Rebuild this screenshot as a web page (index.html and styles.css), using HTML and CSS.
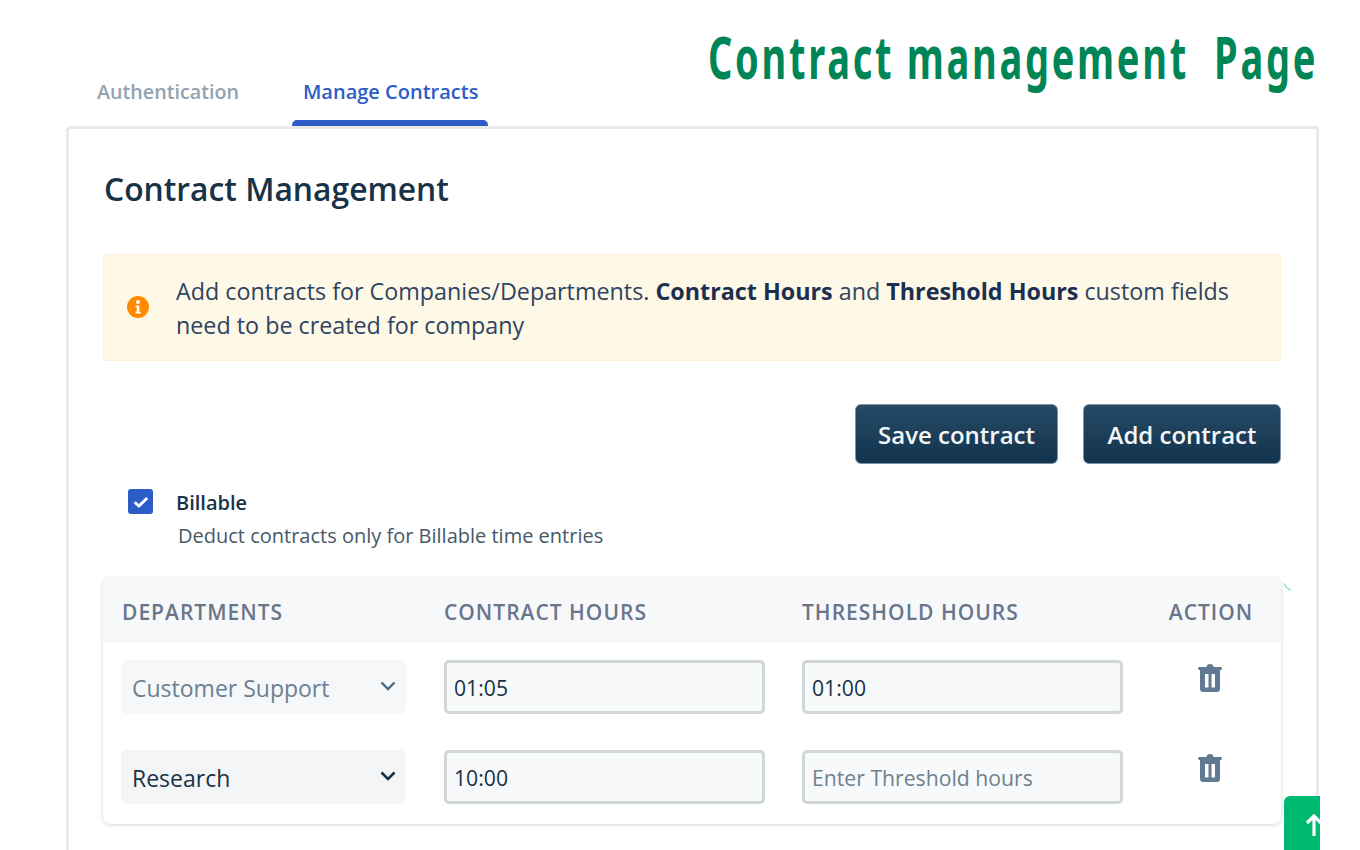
FILE: index.html
```html
<!DOCTYPE html>
<html>
<head>
    <meta charset="UTF-8">
    <meta name="viewport" content="width=device-width, initial-scale=1.0">
    <title>Contract management Page</title>
    <link rel="stylesheet" href="styles.css">
</head>
<body>
    <div class="page">
        <div class="banner">Contract management  Page</div>

        <div class="tabs">
            <div class="tab">Authentication</div>
            <div class="tab tab-active">Manage Contracts</div>
        </div>

        <div class="card">
            <h2 class="card-title">Contract Management</h2>

            <div class="notice">
                <svg class="notice-icon" viewBox="0 0 22 22">
                    <circle cx="11" cy="11" r="11" fill="#ff8a00"/>
                    <circle cx="11" cy="6" r="2" fill="#fff"/>
                    <path d="M8.500 9.500h3.800v6.200h1.400v1.800H8.500v-1.800h1.300v-4.400H8.500z" fill="#fff"/>
                </svg>
                <p class="notice-text">Add contracts for Companies/Departments. <b>Contract Hours</b> and <b>Threshold Hours</b> custom fields need to be created for company</p>
            </div>

            <div class="actions">
                <button class="btn">Save contract</button>
                <button class="btn btn-add">Add contract</button>
            </div>

            <div class="billable">
                <div class="checkbox">
                    <svg viewBox="0 0 16 16" width="20" height="20"><path d="M3 8.200l3.300 3L13 4.800" fill="none" stroke="#fff" stroke-width="2.400"/></svg>
                </div>
                <div>
                    <div class="billable-label">Billable</div>
                    <div class="billable-hint">Deduct contracts only for Billable time entries</div>
                </div>
            </div>

            <div class="table">
                <div class="row row-head">
                    <div class="col-first">DEPARTMENTS</div>
                    <div>CONTRACT HOURS</div>
                    <div>THRESHOLD HOURS</div>
                    <div class="col-action">ACTION</div>
                </div>
                <div class="row">
                    <div class="select select-muted">
                        <span>Customer Support</span>
                        <svg class="chevron" viewBox="0 0 16 10"><path d="M1.500 1.500L8 8l6.500-6.500" fill="none" stroke="currentColor" stroke-width="2.400"/></svg>
                    </div>
                    <input class="field" type="text" value="01:05">
                    <input class="field" type="text" value="01:00">
                    <div class="col-action">
                        <svg class="trash" viewBox="0 0 24 28"><path d="M8.500 3C8.500 1 10 0 12 0s3.500 1 3.500 3h7c.8 0 1.500.7 1.500 1.500S23.300 6 22.500 6H22v19c0 1.700-1.300 3-3 3H5c-1.700 0-3-1.300-3-3V6h-.5C.7 6 0 5.300 0 4.500S.7 3 1.500 3zM7 10v13.500h3.500V10zm6.500 0v13.500H17V10z" fill="#5f7a92" fill-rule="evenodd"/></svg>
                    </div>
                </div>
                <div class="row">
                    <div class="select">
                        <span>Research</span>
                        <svg class="chevron" viewBox="0 0 16 10"><path d="M1.500 1.500L8 8l6.500-6.500" fill="none" stroke="currentColor" stroke-width="2.600"/></svg>
                    </div>
                    <input class="field" type="text" value="10:00">
                    <input class="field" type="text" placeholder="Enter Threshold hours">
                    <div class="col-action">
                        <svg class="trash" viewBox="0 0 24 28"><path d="M8.500 3C8.500 1 10 0 12 0s3.500 1 3.500 3h7c.8 0 1.500.7 1.500 1.500S23.300 6 22.500 6H22v19c0 1.700-1.300 3-3 3H5c-1.700 0-3-1.300-3-3V6h-.5C.7 6 0 5.300 0 4.500S.7 3 1.500 3zM7 10v13.500h3.500V10zm6.500 0v13.500H17V10z" fill="#5f7a92" fill-rule="evenodd"/></svg>
                    </div>
                </div>
            </div>
        </div>

        <svg class="tick" viewBox="0 0 8 8"><path d="M0 0c1 3 4 6 7 7" fill="none" stroke="#7fe0bc" stroke-width="1.200"/></svg>

        <div class="to-top">
            <svg viewBox="0 0 20 24" width="20" height="24"><path d="M10 23V3M3 10l7-7 7 7" fill="none" stroke="#fff" stroke-width="3.200"/></svg>
        </div>
    </div>
</body>
</html>
```

FILE: styles.css
```css
html, body {
    margin: 0;
    height: 850px;
    overflow: hidden;
    background: #fff;
}

.page {
    position: relative;
    width: 1320px;
    height: 850px;
    overflow: hidden;
    font-family: "Open Sans", "Noto Sans", sans-serif;
    color: #12344d;
}

.banner {
    position: absolute;
    top: 12px;
    left: 708px;
    font-family: "Noto Sans", sans-serif;
    font-size: 38px;
    line-height: 56px;
    font-weight: 700;
    letter-spacing: 2.72px;
    color: #008556;
    white-space: pre;
    transform: scaleY(1.55);
    transform-origin: left top;
}

.tabs {
    display: flex;
    height: 70px;
    padding: 57px 0 0 86px;
    box-sizing: content-box;
    margin-top: -1px;
}

.tab {
    height: 70px;
    box-sizing: border-box;
    padding: 21px 11px 0;
    margin-right: 42px;
    font-size: 19.700px;
    line-height: 29px;
    font-weight: 600;
    color: #92a2b1;
}

.tab-active {
    width: 196px;
    margin-right: 0;
    padding-right: 12px;
    font-size: 20px;
    color: #2c5cc5;
    position: relative;
    text-align: center;
    white-space: nowrap;
}

.tab-active::after {
    content: "";
    position: absolute;
    left: 0;
    right: 0;
    bottom: 0;
    height: 6px;
    background: #2c5cc5;
    border-radius: 5px 5px 0 0;
}

.card {
    margin-left: 66px;
    width: 1253px;
    height: 760px;
    box-sizing: border-box;
    border: 3px solid #e9e9e9;
    border-bottom: 0;
    border-radius: 4px 4px 0 0;
    padding: 39px 35px 0 34px;
}

.card-title {
    margin: 0 0 0 1px;
    font-size: 31.800px;
    line-height: 42px;
    font-weight: 600;
    color: #183247;
}

.notice {
    margin-top: 44px;
    height: 107px;
    box-sizing: border-box;
    display: flex;
    align-items: center;
    gap: 27px;
    padding: 0 50px 0 23px;
    background: #fef8e6;
    border: 1px solid #feeeda;
    border-radius: 4px;
}

.notice-icon {
    width: 22px;
    height: 22px;
    flex: none;
    margin-top: -1px;
}

.notice-text {
    margin: 0;
    padding-top: 1px;
    font-size: 23.300px;
    line-height: 34px;
    color: #2f4460;
}

.notice-text b {
    font-weight: 700;
    color: #1c2f50;
}

.actions {
    margin-top: 43px;
    display: flex;
    justify-content: flex-end;
    gap: 25px;
}

.btn {
    height: 60px;
    padding: 0 22px;
    font-family: inherit;
    font-size: 24px;
    font-weight: 600;
    color: #f4f6f8;
    background: linear-gradient(#264966, #12344d);
    border: 1px solid #7f93a5;
    border-radius: 6px;
}

.btn-add {
    padding: 0 23.500px;
}

.billable {
    margin-top: 25px;
    padding-left: 25px;
    display: flex;
    gap: 23px;
}

.checkbox {
    width: 25px;
    height: 25px;
    flex: none;
    display: flex;
    align-items: center;
    justify-content: center;
    background: #2c5cc5;
    border-radius: 3px;
}

.billable-label {
    font-size: 20px;
    line-height: 28px;
    font-weight: 600;
    color: #183247;
}

.billable-hint {
    margin-top: 5px;
    margin-left: 2px;
    font-size: 20px;
    line-height: 28px;
    color: #475867;
}

.table {
    margin-top: 28px;
    height: 246px;
    background: #fff;
    border-radius: 8px;
    box-shadow: 0 1px 4px rgba(18, 52, 77, 0.2);
}

.row {
    display: grid;
    grid-template-columns: 285px 321px 321px 100px;
    column-gap: 38px;
    align-items: start;
    padding: 17px 0 0 18px;
    height: 90px;
    box-sizing: border-box;
}

.row > :nth-child(3) {
    margin-left: -1px;
}

.row-head {
    height: 65px;
    padding-top: 2px;
    align-items: center;
    background: #f7f8fa;
    border-radius: 8px 8px 0 0;
    font-size: 21px;
    font-weight: 600;
    color: #69758a;
    letter-spacing: 1px;
}

.col-first {
    margin-left: 1px;
}

.col-action {
    text-align: center;
    margin-left: -2px;
    white-space: nowrap;
}

.select {
    height: 54px;
    box-sizing: border-box;
    display: flex;
    align-items: center;
    justify-content: space-between;
    padding: 0 10px 0 11px;
    background: #f3f5f7;
    border-radius: 6px;
    font-size: 23px;
    color: #183247;
}

.select span {
    padding-top: 2px;
}

.select-muted {
    background: #f5f7f9;
    color: #6b8093;
}

.chevron {
    width: 16px;
    height: 10px;
    margin-top: -3px;
}

.select-muted .chevron {
    color: #4f6a80;
}

.field {
    width: 321px;
    height: 54px;
    box-sizing: border-box;
    padding: 1px 7px 0;
    font-family: inherit;
    font-size: 21.200px;
    color: #183247;
    background: #f7f9fa;
    border: 3px solid #cfd7d9;
    border-radius: 5px;
    outline: none;
}

.field::placeholder {
    color: #6e8090;
    opacity: 1;
}

.trash {
    width: 24px;
    height: 28px;
    margin-top: 4px;
    margin-left: -2px;
}

.tick {
    position: absolute;
    left: 1284px;
    top: 583px;
    width: 8px;
    height: 8px;
}

.to-top {
    position: absolute;
    left: 1284px;
    top: 796px;
    width: 50px;
    height: 54px;
    box-sizing: border-box;
    padding: 17px 0 0 20px;
    background: #00b971;
    border-radius: 6px 0 0 0;
}
```
